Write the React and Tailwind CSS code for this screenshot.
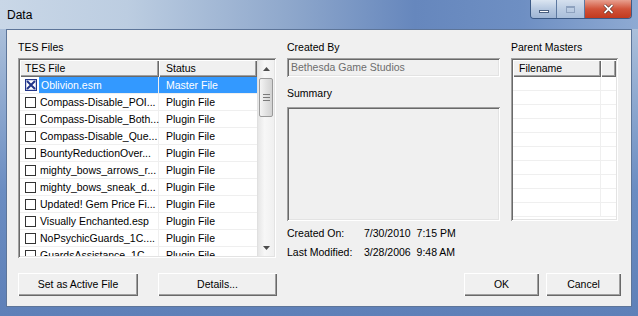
const rows = [
  ['Oblivion.esm', 'Master File', true],
  ['Compass-Disable_POI...', 'Plugin File'],
  ['Compass-Disable_Both...', 'Plugin File'],
  ['Compass-Disable_Que...', 'Plugin File'],
  ['BountyReductionOver...', 'Plugin File'],
  ['mighty_bows_arrows_r...', 'Plugin File'],
  ['mighty_bows_sneak_d...', 'Plugin File'],
  ['Updated! Gem Price Fi...', 'Plugin File'],
  ['Visually Enchanted.esp', 'Plugin File'],
  ['NoPsychicGuards_1C....', 'Plugin File'],
  ['GuardsAssistance_1C...', 'Plugin File'],
];

const sunken =
  'shadow-[inset_1px_1px_0_#a0a0a0,inset_-1px_-1px_0_#ffffff,inset_2px_2px_0_#696969,inset_-2px_-2px_0_#e3e3e3]';
const raised =
  'shadow-[inset_1px_1px_0_#ffffff,inset_-1px_-1px_0_#696969,inset_-2px_-2px_0_#a0a0a0]';

function Btn({ children, w }) {
  return (
    <div className={`${w} h-[23px] flex items-center justify-center bg-[#f0f0f0] ${raised}`}>
      {children}
    </div>
  );
}

function Box({ checked }) {
  if (checked) {
    return (
      <svg width="12" height="12" viewBox="0 0 12 12" className="shrink-0">
        <rect x="0.5" y="0.5" width="11" height="11" fill="none" stroke="#22358a" strokeWidth="1.4" />
        <path d="M2 2 L10 10 M10 2 L2 10" stroke="#22358a" strokeWidth="2" />
      </svg>
    );
  }
  return <div className="w-[11px] h-[11px] shrink-0 border border-[#333] bg-white" />;
}

function TesList() {
  return (
    <div className={`relative h-[200px] w-[258px] bg-white p-[2px] ${sunken}`}>
      <div className="flex h-full overflow-hidden">
        <div className="w-[237px] h-full overflow-hidden">
          <div className="flex h-[17px]">
            <div className={`w-[139px] pl-[5px] leading-[17px] bg-[#f0f0f0] ${raised}`}>TES File</div>
            <div className={`w-[98px] pl-[7px] leading-[17px] bg-[#f0f0f0] ${raised}`}>Status</div>
          </div>
          {rows.map(([name, status, sel], i) => (
            <div key={i} className="flex h-[17px] border-b border-[#efefef]">
              <div className="w-[139px] flex items-center pl-[5px] border-r border-[#efefef]">
                <Box checked={sel} />
                <div
                  className={`ml-[2px] pl-[2px] h-full flex-1 leading-[16px] whitespace-nowrap ${
                    sel ? 'bg-[#3399ff] text-white' : ''
                  }`}
                >
                  {name}
                </div>
              </div>
              <div
                className={`w-[98px] pl-[7px] leading-[16px] ${sel ? 'bg-[#3399ff] text-white' : ''}`}
              >
                {status}
              </div>
            </div>
          ))}
        </div>
        <div className="w-[17px] h-full flex flex-col bg-[linear-gradient(90deg,#e6e6e6,#f7f7f7_40%,#f0f0f0)] border-l border-[#e0e0e0]">
          <div className="h-[17px] flex items-center justify-center">
            <svg width="7" height="4" viewBox="0 0 7 4">
              <path d="M0 4 L3.5 0 L7 4 Z" fill="#4d4d4d" />
            </svg>
          </div>
          <div className="mx-[1px] mt-[1px] h-[39px] rounded-[2px] border border-[#9a9a9a] bg-[linear-gradient(90deg,#f4f4f4,#e2e2e2_50%,#d2d2d2)] flex flex-col items-center justify-center gap-[2px]">
            <div className="w-[7px] h-px bg-[#7a7a7a]" />
            <div className="w-[7px] h-px bg-[#7a7a7a]" />
            <div className="w-[7px] h-px bg-[#7a7a7a]" />
          </div>
          <div className="flex-1" />
          <div className="h-[17px] flex items-center justify-center">
            <svg width="7" height="4" viewBox="0 0 7 4">
              <path d="M0 0 L3.5 4 L7 0 Z" fill="#4d4d4d" />
            </svg>
          </div>
        </div>
      </div>
    </div>
  );
}

function MastersList() {
  return (
    <div className={`h-[163px] w-[107px] bg-white p-[2px] ${sunken}`}>
      <div className="h-full overflow-hidden relative">
        <div className="flex h-[17px]">
          <div className={`w-[88px] pl-[6px] leading-[17px] bg-[#f0f0f0] ${raised}`}>Filename</div>
          <div className={`flex-1 bg-[#f0f0f0] ${raised}`} />
        </div>
        {Array.from({ length: 10 }).map((_, i) => (
          <div key={i} className="flex h-[14px] border-b border-[#efefef]">
            <div className="w-[88px] border-r border-[#efefef]" />
          </div>
        ))}
      </div>
    </div>
  );
}

export default function App() {
  return (
    <div
      className="w-[638px] h-[316px] flex flex-col bg-[linear-gradient(180deg,#b6c8de,#6b8dc2_60%,#5e80b8)] text-[10.5px] text-black"
      style={{ fontFamily: '"Liberation Sans", Arial, sans-serif' }}
    >
      <div className="h-[29px] flex items-start justify-between bg-[linear-gradient(90deg,#c9d7e7_0%,#bccde1_20%,#8fa8cc_45%,#6687bd_65%,#6e8fc3_82%,#8eaad3_100%)]">
        <div className="pl-[7px] pt-[6px] text-[12px]">Data</div>
        <div className="mr-[6px] flex h-[19px] rounded-b-[4px] border border-t-0 border-[#3c5a86] overflow-hidden">
          <div className="w-[26px] flex items-center justify-center bg-[linear-gradient(180deg,#dbe5f1,#b6c8e0_50%,#9fb5d4)] border-r border-[#5c78a0]">
            <div className="w-[10px] h-[3px] bg-white border border-[#4a5f80] mt-[4px]" />
          </div>
          <div className="w-[28px] flex items-center justify-center bg-[linear-gradient(180deg,#d5e0ee,#bccde3_50%,#aabfdb)] border-r border-[#5c78a0]">
            <div className="w-[9px] h-[7px] border border-[#8ea2bf] border-t-2" />
          </div>
          <div className="w-[46px] flex items-center justify-center bg-[linear-gradient(180deg,#e8a08f,#d1533a_50%,#c23a1f)]">
            <svg width="11" height="10" viewBox="0 0 11 10">
              <path d="M1.5 1 L9.5 9 M9.5 1 L1.5 9" stroke="#3a1a14" strokeWidth="3" />
              <path d="M1.5 1 L9.5 9 M9.5 1 L1.5 9" stroke="#ffffff" strokeWidth="1.8" />
            </svg>
          </div>
        </div>
      </div>
      <div className="mx-[6px] h-[278px] bg-[#f0f0f0] border border-[#5d7599] px-[11px] pt-[10px]">
        <div className="flex gap-[11px] h-[219px]">
          <div className="w-[258px]">
            <div className="h-[14px] leading-[14px]">TES Files</div>
            <div className="mt-[4px]">
              <TesList />
            </div>
          </div>
          <div className="w-[213px]">
            <div className="h-[14px] leading-[14px]">Created By</div>
            <div className={`mt-[4px] h-[19px] pl-[4px] leading-[19px] text-[#6d6d6d] bg-[#f0f0f0] ${sunken}`}>
              Bethesda Game Studios
            </div>
            <div className="mt-[9px] h-[14px] leading-[14px]">Summary</div>
            <div className={`mt-[7px] h-[114px] bg-[#f0f0f0] ${sunken}`} />
            <div className="mt-[5px] h-[14px] leading-[14px] flex">
              <span className="w-[77px]">Created On:</span>
              <span>7/30/2010&nbsp;&nbsp;7:15 PM</span>
            </div>
            <div className="mt-[5px] h-[14px] leading-[14px] flex">
              <span className="w-[77px]">Last Modified:</span>
              <span>3/28/2006&nbsp;&nbsp;9:48 AM</span>
            </div>
          </div>
          <div className="w-[107px]">
            <div className="h-[14px] leading-[14px]">Parent Masters</div>
            <div className="mt-[4px]">
              <MastersList />
            </div>
          </div>
        </div>
        <div className="mt-[14px] w-[603px] flex justify-between">
          <div className="flex gap-[20px]">
            <Btn w="w-[120px]">Set as Active File</Btn>
            <Btn w="w-[119px]">Details...</Btn>
          </div>
          <div className="flex gap-[7px]">
            <Btn w="w-[75px]">OK</Btn>
            <Btn w="w-[75px]">Cancel</Btn>
          </div>
        </div>
      </div>
    </div>
  );
}
